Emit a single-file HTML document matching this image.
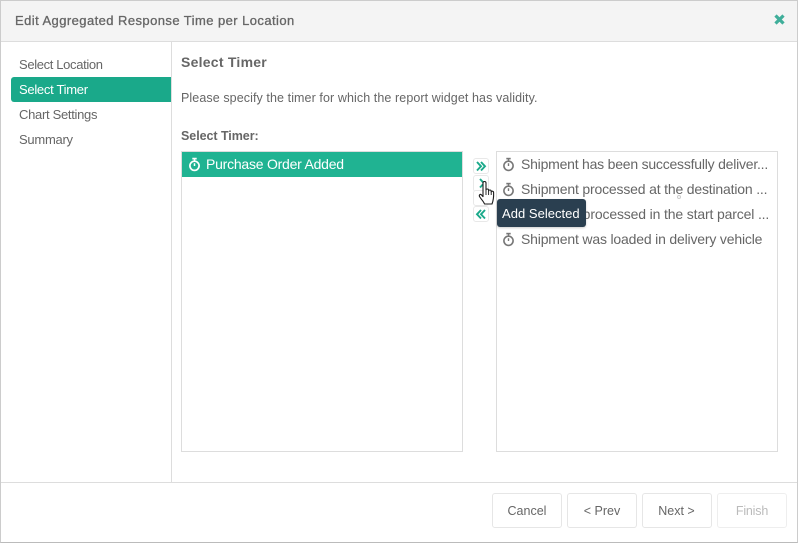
<!DOCTYPE html>
<html><head><meta charset="utf-8"><style>
html,body{margin:0;padding:0;background:#fff}
#r{position:relative;width:798px;height:543px;overflow:hidden;font-family:"Liberation Sans",sans-serif;color:#666;background:#fff}
#r div,#r svg{position:absolute}
.t{white-space:nowrap;line-height:18px;height:18px;font-size:13px}
.b{border:1px solid #e6e6e6;border-radius:3px;box-sizing:border-box;width:70px;height:35px;top:493px;text-align:center;line-height:35px;font-size:12.5px;color:#666;background:#fff}
.s{box-sizing:border-box;border:1px solid #e8e8e8;border-radius:3px;width:16px;height:16px;left:473px;background:#fff}
</style></head><body><div id="r">
<div style="left:0;top:0;width:798px;height:543px;box-sizing:border-box;border:1px solid #ccc;border-bottom-color:#bbb"></div>
<div style="left:1px;top:1px;width:796px;height:40px;background:#f4f4f4;border-bottom:1px solid #ddd"></div>
<div class="t" style="left:15px;top:12px;font-size:13px;font-weight:400;-webkit-text-stroke:.3px #666;letter-spacing:.43px">Edit Aggregated Response Time per Location</div>
<svg style="left:773px;top:13px" width="13" height="13" viewBox="0 0 13 13"><path d="M2.5 2.5L10.5 10.5M10.5 2.5L2.5 10.5" stroke="#3fae9a" stroke-width="3.2"/></svg>

<div style="left:171px;top:42px;width:1px;height:440px;background:#ddd"></div>
<div style="left:1px;top:482px;width:796px;height:1px;background:#ddd"></div>

<div class="t" style="left:19px;top:56px;letter-spacing:-.35px">Select Location</div>
<div style="left:11px;top:77px;width:160px;height:25px;background:#1aa98a;border-radius:3px 0 0 3px"></div>
<div class="t" style="left:19px;top:81px;color:#fff;letter-spacing:-.29px">Select Timer</div>
<div class="t" style="left:19px;top:106px;letter-spacing:-.3px">Chart Settings</div>
<div class="t" style="left:19px;top:131px;letter-spacing:-.26px">Summary</div>

<div class="t" style="left:181px;top:53px;font-size:14px;font-weight:700;letter-spacing:.25px">Select Timer</div>
<div class="t" style="left:181px;top:89px;font-size:12.5px;letter-spacing:.09px">Please specify the timer for which the report widget has validity.</div>
<div class="t" style="left:181px;top:127px;font-size:12.5px;font-weight:700;letter-spacing:-.05px">Select Timer:</div>

<div style="left:181px;top:151px;width:282px;height:301px;box-sizing:border-box;border:1px solid #ddd"></div>
<div style="left:182px;top:152px;width:280px;height:25px;background:#20b392"></div>
<svg style="left:187px;top:157px" width="15" height="15" viewBox="0 0 15 15" fill="none" stroke="#fff"><circle cx="7.5" cy="8.8" r="4.6" stroke-width="1.7"/><path d="M5.3 1.6H9.7" stroke-width="1.7"/><path d="M7.5 2V4M7.5 6.2V9" stroke-width="1.5"/></svg>
<div class="t" style="left:206px;top:155px;font-size:14px;color:#fff;letter-spacing:-.23px">Purchase Order Added</div>

<div style="left:496px;top:151px;width:282px;height:301px;box-sizing:border-box;border:1px solid #ddd"></div>
<svg style="left:501px;top:157px" width="15" height="15" viewBox="0 0 15 15" fill="none" stroke="#777"><circle cx="7.5" cy="8.8" r="4.6" stroke-width="1.6"/><path d="M5.3 1.6H9.7" stroke-width="1.6"/><path d="M7.5 2V4M7.5 6.2V9" stroke-width="1.4"/></svg>
<svg style="left:501px;top:182px" width="15" height="15" viewBox="0 0 15 15" fill="none" stroke="#777"><circle cx="7.5" cy="8.8" r="4.6" stroke-width="1.6"/><path d="M5.3 1.6H9.7" stroke-width="1.6"/><path d="M7.5 2V4M7.5 6.2V9" stroke-width="1.4"/></svg>
<svg style="left:501px;top:232px" width="15" height="15" viewBox="0 0 15 15" fill="none" stroke="#777"><circle cx="7.5" cy="8.8" r="4.6" stroke-width="1.6"/><path d="M5.3 1.6H9.7" stroke-width="1.6"/><path d="M7.5 2V4M7.5 6.2V9" stroke-width="1.4"/></svg>
<div class="t" style="left:521px;top:155px;font-size:14px;letter-spacing:-.22px">Shipment has been successfully deliver...</div>
<div class="t" style="left:521px;top:180px;font-size:14px;letter-spacing:-.18px">Shipment processed at the destination ...</div>
<div class="t" style="left:521px;top:205px;font-size:14px;letter-spacing:-.15px">Shipment processed in the start parcel ...</div>
<div class="t" style="left:521px;top:230px;font-size:14px;letter-spacing:-.18px">Shipment was loaded in delivery vehicle</div>
<div style="left:677px;top:195px;width:4px;height:4px;border:1px solid #ccc;border-radius:50%;box-sizing:border-box"></div>

<div class="s" style="top:158px"></div>
<div class="s" style="top:175px;height:17px"></div>
<div class="s" style="top:190px;height:16px"></div>
<div class="s" style="top:206px"></div>
<svg style="left:475px;top:160px" width="12" height="12" viewBox="0 0 12 12" fill="none" stroke="#1aa98a" stroke-width="1.9"><path d="M2 2L6 6.3L2 10.5M6 2L10 6.3L6 10.5"/></svg>
<svg style="left:476px;top:177px" width="12" height="12" viewBox="0 0 12 12" fill="none" stroke="#1aa98a" stroke-width="1.9"><path d="M4 2L8 6.3L4 10.5"/></svg>
<svg style="left:475px;top:208px" width="12" height="12" viewBox="0 0 12 12" fill="none" stroke="#1aa98a" stroke-width="1.9"><path d="M6 2L2 6.3L6 10.5M10 2L6 6.3L10 10.5"/></svg>

<div style="left:497px;top:199px;width:89px;height:28px;background:#2a3f50;border-radius:3px;box-shadow:0 1px 2px rgba(0,0,0,.2)"></div>
<div class="t" style="left:502px;top:205px;color:#fff;font-size:13px;letter-spacing:.03px">Add Selected</div>
<svg style="left:478px;top:180px" width="20" height="26" viewBox="0 0 20 26"><path d="M5 3C5 1 8 1 8 3V10C8 8.6 10.6 8.6 10.6 10.4V11C10.6 9.6 13.2 9.6 13.2 11.4V12C13.2 10.8 15.6 10.8 15.6 12.6C15.8 17 15.5 20 14 24H6.5C5.6 21.5 3.8 20 1.8 17C0.5 15 2.2 13.6 3.6 15L5 16.6Z" fill="#fff" stroke="#1c1c1c" stroke-width="1.1" stroke-linejoin="round"/><path d="M8 10V15M10.6 11V15M13.2 12V15" stroke="#1c1c1c" stroke-width=".9"/></svg>

<div class="b" style="left:492px">Cancel</div>
<div class="b" style="left:567px">&lt; Prev</div>
<div class="b" style="left:642px;text-indent:-1px">Next &gt;</div>
<div class="b" style="left:717px;color:#bbb;border-color:#eee;letter-spacing:-.2px">Finish</div>
</div></body></html>
